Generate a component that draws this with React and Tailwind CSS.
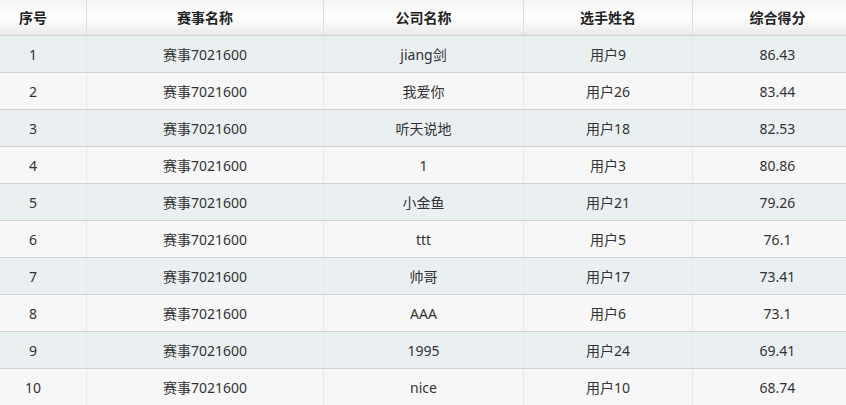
import React from "react";

const rows = [
  ["1", "赛事7021600", "jiang剑", "用户9", "86.43"],
  ["2", "赛事7021600", "我爱你", "用户26", "83.44"],
  ["3", "赛事7021600", "听天说地", "用户18", "82.53"],
  ["4", "赛事7021600", "1", "用户3", "80.86"],
  ["5", "赛事7021600", "小金鱼", "用户21", "79.26"],
  ["6", "赛事7021600", "ttt", "用户5", "76.1"],
  ["7", "赛事7021600", "帅哥", "用户17", "73.41"],
  ["8", "赛事7021600", "AAA", "用户6", "73.1"],
  ["9", "赛事7021600", "1995", "用户24", "69.41"],
  ["10", "赛事7021600", "nice", "用户10", "68.74"],
];

const headers = ["序号", "赛事名称", "公司名称", "选手姓名", "综合得分"];
const widths = ["w-[87px] pr-[20px]", "w-[237px]", "w-[200px]", "w-[169px]", "flex-1 pl-[16px]"];

export default function App() {
  return (
    <div
      className="w-[846px] h-[405px] overflow-hidden bg-white text-[14px] text-[#333]"
      style={{ fontFamily: '"Noto Sans", "Noto Sans CJK SC", sans-serif' }}
    >
      <div className="flex h-[36px] border-b border-[#cfcfcf] bg-gradient-to-b from-[#f4f4f4] via-white to-[#e9e9e9]">
        {headers.map((h, i) => (
          <div
            key={i}
            className={`${widths[i]} flex items-center justify-center font-bold text-[#222] ${
              i < 4 ? "border-r border-[#dedede]" : ""
            }`}
          >
            {h}
          </div>
        ))}
      </div>
      {rows.map((r, ri) => (
        <div
          key={ri}
          className={`flex h-[37px] border-b border-[#d2d2d2] ${
            ri % 2 === 0 ? "bg-[#eaeff2]" : "bg-[#f7f7f7]"
          }`}
        >
          {r.map((c, i) => (
            <div
              key={i}
              className={`${widths[i]} flex items-center justify-center ${
                i < 4 ? "border-r border-[#e6e8ea]" : ""
              }`}
            >
              {c}
            </div>
          ))}
        </div>
      ))}
    </div>
  );
}
